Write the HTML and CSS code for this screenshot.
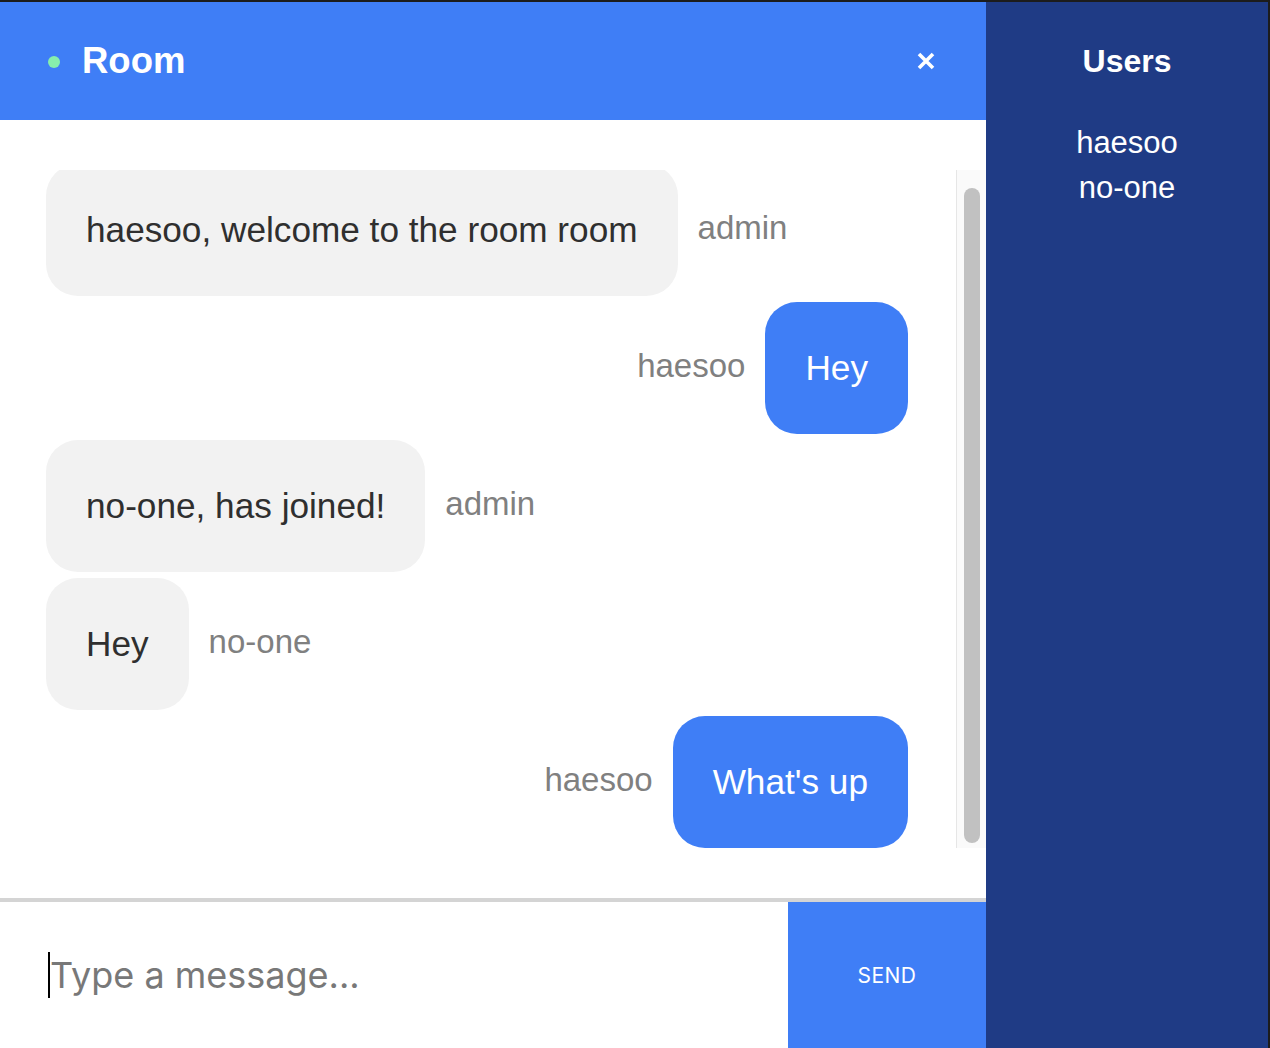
FILE: index.html
```html
<!DOCTYPE html>
<html lang="en">
<head>
<meta charset="utf-8">
<title>Room</title>
<link rel="stylesheet" href="styles.css">
</head>
<body>
<div class="app">
  <main class="chat">
    <header class="chat-header">
      <div class="room">
        <span class="dot"></span>
        <h1 class="room-name">Room</h1>
      </div>
      <button class="close" type="button" aria-label="Close">
        <svg width="20" height="20" viewBox="0 0 20 20"><path d="M3 3 L17 17 M17 3 L3 17" stroke="#fff" stroke-width="3.6" fill="none"/></svg>
      </button>
    </header>
    <section class="messages-wrap">
      <div class="messages">
        <div class="list">
          <div class="msg">
            <div class="bubble">haesoo, welcome to the room room</div>
            <span class="name">admin</span>
          </div>
          <div class="msg mine">
            <span class="name">haesoo</span>
            <div class="bubble">Hey</div>
          </div>
          <div class="msg">
            <div class="bubble">no-one, has joined!</div>
            <span class="name">admin</span>
          </div>
          <div class="msg">
            <div class="bubble">Hey</div>
            <span class="name">no-one</span>
          </div>
          <div class="msg mine">
            <span class="name">haesoo</span>
            <div class="bubble">What's up</div>
          </div>
        </div>
      </div>
      <div class="scrollbar" aria-hidden="true"><div class="thumb"></div></div>
    </section>
    <form class="composer">
      <span class="caret"></span>
      <input class="input" type="text" placeholder="Type a message...">
      <button class="send" type="button">SEND</button>
    </form>
  </main>
  <aside class="users">
    <h2 class="users-title">Users</h2>
    <ul class="user-list">
      <li>haesoo</li>
      <li>no-one</li>
    </ul>
  </aside>
</div>
</body>
</html>
```

FILE: styles.css
```css
* { box-sizing: border-box; }

html, body {
  margin: 0;
  padding: 0;
  background: #1c1c1c;
}

body {
  font-family: "Liberation Sans", Arial, sans-serif;
}

.app {
  width: 1270px;
  height: 1048px;
  border-top: 2px solid #1c1c1c;
  border-right: 2px solid #1c1c1c;
  display: grid;
  grid-template-columns: 986px 1fr;
  overflow: hidden;
}

.chat {
  background: #fff;
  display: flex;
  flex-direction: column;
  height: 1046px;
}

.chat-header {
  height: 118px;
  flex: none;
  background: #3f7ef6;
  display: flex;
  align-items: center;
  justify-content: space-between;
  padding: 0 50px 0 48px;
}

.room {
  display: flex;
  align-items: center;
}

.dot {
  width: 12px;
  height: 12px;
  border-radius: 50%;
  background: #86efac;
  margin-right: 22px;
  margin-top: 2px;
}

.room-name {
  margin: 0;
  color: #fff;
  font-size: 36.5px;
  font-weight: 700;
  line-height: 1;
}

.close {
  border: 0;
  background: transparent;
  padding: 0;
  width: 20px;
  height: 20px;
  display: block;
}

.close svg { display: block; }

.messages-wrap {
  flex: 1;
  padding: 50px 0;
  min-height: 0;
  display: flex;
}

.messages {
  flex: 1;
  min-width: 0;
  height: 678px;
  overflow: hidden;
  display: flex;
  flex-direction: column-reverse;
}

.scrollbar {
  width: 30px;
  height: 678px;
  flex: none;
  background: #fafafa;
  border-left: 1px solid #e6e6e6;
  padding: 18px 6px 5px 7px;
}

.thumb {
  height: 100%;
  background: #c1c1c1;
  border-radius: 8px;
}

.list {
  display: flex;
  flex-direction: column;
  gap: 6px;
  padding: 6px 48px 0 46px;
}

.msg {
  display: flex;
  align-items: center;
  gap: 20px;
}

.msg.mine {
  justify-content: flex-end;
}

.bubble {
  background: #f2f2f2;
  color: #2f2f2f;
  font-size: 35.2px;
  line-height: 52px;
  padding: 40px;
  border-radius: 32px;
  white-space: nowrap;
}

.mine .bubble {
  background: #3f7ef6;
  color: #fff;
}

.name {
  color: #808080;
  font-size: 33px;
  line-height: 40px;
  margin-top: -4px;
}

.composer {
  flex: none;
  height: 150px;
  border-top: 4px solid #d4d4d4;
  display: flex;
  align-items: stretch;
  padding-left: 48px;
  margin: 0;
}

.caret {
  width: 2px;
  height: 46px;
  background: #000;
  align-self: center;
  flex: none;
}

.input {
  flex: 1;
  min-width: 0;
  border: 0;
  outline: none;
  padding: 0;
  background: transparent;
  font-family: Inter, "Noto Sans", sans-serif;
  font-size: 36px;
  color: #333;
}

.input::placeholder {
  color: #787878;
}

.send {
  width: 198px;
  flex: none;
  border: 0;
  background: #3f7ef6;
  color: #fff;
  font-family: Inter, "Noto Sans", sans-serif;
  font-size: 21px;
  letter-spacing: 0.5px;
  padding: 0;
}

.users {
  background: #1f3b85;
  color: #fff;
  text-align: center;
}

.users-title {
  margin: 0;
  height: 118px;
  display: flex;
  align-items: center;
  justify-content: center;
  font-size: 32px;
  font-weight: 700;
}

.user-list {
  list-style: none;
  margin: 0;
  padding: 0;
  font-size: 31px;
  line-height: 45px;
}
```
